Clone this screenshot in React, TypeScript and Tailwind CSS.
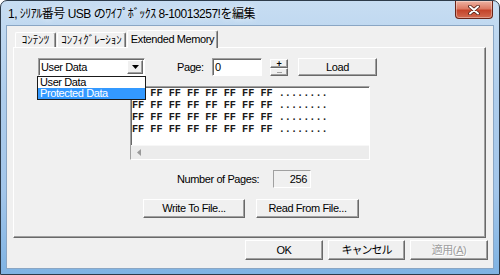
import React from 'react';

const raised =
  'border border-t-white border-l-white border-r-[#696969] border-b-[#696969] shadow-[inset_-1px_-1px_0_#a0a0a0] bg-[#f0f0f0]';
const sunken =
  'border border-t-[#a0a0a0] border-l-[#a0a0a0] border-r-white border-b-white shadow-[inset_1px_1px_0_#696969]';

const hexRow = 'FF FF FF FF FF FF FF FF ........';

function CloseButton() {
  return (
    <div className="w-[38px] h-[18px] rounded-b-[4px] border border-t-0 border-[#6b2418] bg-[linear-gradient(to_bottom,#eeb3a3_0%,#dc7a64_45%,#c4442b_55%,#d26a50_100%)] shadow-[inset_0_0_0_1px_rgba(255,255,255,0.35)] flex items-center justify-center">
      <svg width="12" height="10" viewBox="0 0 12 10">
        <path d="M2 1.5 L10 8.5 M10 1.5 L2 8.5" stroke="#4a1b12" strokeWidth="3.6" strokeLinecap="round" />
        <path d="M2 1.5 L10 8.5 M10 1.5 L2 8.5" stroke="#ffffff" strokeWidth="2" strokeLinecap="round" />
      </svg>
    </div>
  );
}

function Btn({ children, className }: { children: React.ReactNode; className: string }) {
  return <div className={`${raised} ${className} flex items-center justify-center`}>{children}</div>;
}

export default function App() {
  return (
    <div className="w-[500px] h-[275px] overflow-hidden flex flex-col border border-[#2d3b4a] rounded-t-[7px] bg-[linear-gradient(to_bottom,#c7ddf2_0%,#aecdec_35%,#a3c6ea_70%,#7fb3e3_100%)] font-['Liberation_Sans','Noto_Sans_CJK_JP',sans-serif] text-[11px] tracking-[-0.4px] text-black">
      {/* title bar */}
      <div className="h-[25px] flex items-start justify-between pl-[7px] pr-[6px]">
        <div className="pt-[5px] text-[12px] tracking-[-0.5px] leading-[16px] [text-shadow:0_0_6px_rgba(255,255,255,0.9)]">
          1, ｼﾘｱﾙ番号 USB のﾜｲﾌﾟﾎﾞｯｸｽ 8-10013257!を編集
        </div>
        <CloseButton />
      </div>

      {/* client area */}
      <div className="mx-[6px] h-[242px] bg-[#f0f0f0] shadow-[0_0_0_1px_#8aa6c4] flex flex-col">
        {/* tabs */}
        <div className="h-[21px] flex items-end pl-[8px]">
          <div className="w-[41px] h-[15px] border-l border-t border-l-white border-t-white border-r border-r-[#696969] rounded-t-[2px] shadow-[inset_-1px_0_0_#a0a0a0] flex items-center justify-center leading-[13px] tracking-normal">
            ｺﾝﾃﾝﾂ
          </div>
          <div className="ml-px w-[69px] h-[15px] border-l border-t border-l-white border-t-white border-r border-r-[#696969] rounded-t-[2px] shadow-[inset_-1px_0_0_#a0a0a0] flex items-center justify-center leading-[13px] tracking-normal">
            ｺﾝﾌｨｸﾞﾚｰｼｮﾝ
          </div>
          <div className="relative z-10 -mb-px ml-px w-[91px] h-[18px] bg-[#f0f0f0] border-l border-t border-l-white border-t-white border-r border-r-[#696969] rounded-t-[2px] shadow-[inset_-1px_0_0_#a0a0a0] flex items-start justify-center pt-[1px] leading-[14px]">
            Extended Memory
          </div>
        </div>

        {/* tab panel */}
        <div className="mx-[6px] mr-[7px] h-[191px] border border-t-white border-l-white border-r-[#696969] border-b-[#696969] shadow-[inset_-1px_-1px_0_#a0a0a0] flex flex-col">
          {/* row 1 */}
          <div className="pt-[10px] pl-[24px] flex items-start">
            <div className="relative w-[107px] h-[18px]">
              <div className={`${sunken} w-full h-full bg-white flex items-center justify-between`}>
                <span className="pl-[2px] leading-[14px]">User Data</span>
                <div className={`${raised} w-[16px] h-[14px] mr-px flex items-center justify-center`}>
                  <svg width="7" height="4" viewBox="0 0 7 4">
                    <path d="M0 0 H7 L3.5 4 Z" fill="#000" />
                  </svg>
                </div>
              </div>
              <div className="absolute left-[-1px] top-[18px] z-20 w-[109px] h-[24px] border border-[#1a1a1a] bg-white flex flex-col">
                <div className="h-[11px] leading-[11px] pl-[2px]">User Data</div>
                <div className="h-[11px] leading-[11px] pl-[2px] bg-[#3399ff] text-white">Protected Data</div>
              </div>
            </div>
            <div className="ml-[32px] w-[35px] h-[18px] flex items-center">Page:</div>
            <div className={`${sunken} w-[50px] h-[18px] bg-white flex items-center pl-[2px] leading-[14px]`}>0</div>
            <div className="ml-[8px] mt-px w-[18px] h-[17px] flex flex-col">
              <div className={`${raised} h-[9px] flex items-center justify-center text-[9px] leading-[8px] font-bold`}>+</div>
              <div className={`${raised} h-[8px] flex items-center justify-center`}>
                <div className="w-[5px] h-px bg-[#a0a0a0]" />
              </div>
            </div>
            <Btn className="ml-[10px] w-[79px] h-[18px]">Load</Btn>
          </div>

          {/* hex box */}
          <div className={`${sunken} mt-[10px] ml-[116px] w-[240px] h-[74px] bg-white flex flex-col`}>
            <div className="flex-1 pt-px pl-px font-['Liberation_Mono',monospace] text-[10.2px] tracking-normal leading-[12px] font-bold text-[#1a1a1a] whitespace-pre overflow-hidden">
              <div>{hexRow}</div>
              <div>{hexRow}</div>
              <div>{hexRow}</div>
              <div>{hexRow}</div>
            </div>
            <div className="h-[14px] bg-[#ececec] border-t border-t-[#f7f7f7] flex items-center pl-[6px]">
              <svg width="4" height="7" viewBox="0 0 4 7">
                <path d="M4 0 V7 L0 3.5 Z" fill="#9a9a9a" />
              </svg>
            </div>
          </div>

          {/* number of pages */}
          <div className="mt-[10px] pl-[163px] flex items-center">
            <div className="w-[96px]">Number of Pages:</div>
            <div className="w-[38px] h-[18px] border border-t-[#a0a0a0] border-l-[#a0a0a0] border-r-white border-b-white bg-[#f0f0f0] flex items-center justify-end pr-[3px]">
              256
            </div>
          </div>

          {/* file buttons */}
          <div className="mt-[11px] pl-[129px] flex gap-[11px]">
            <Btn className="w-[102px] h-[19px]">Write To File...</Btn>
            <Btn className="w-[103px] h-[19px]">Read From File...</Btn>
          </div>
        </div>

        {/* dialog buttons */}
        <div className="mt-[2px] pr-[5px] flex justify-end gap-[5px]">
          <Btn className="w-[78px] h-[20px]">OK</Btn>
          <Btn className="w-[77px] h-[20px] tracking-[-1px]">キャンセル</Btn>
          <Btn className="w-[78px] h-[20px] text-[#a0a0a0] [text-shadow:1px_1px_0_#ffffff]">
            適用(<span className="underline">A</span>)
          </Btn>
        </div>
      </div>
    </div>
  );
}
